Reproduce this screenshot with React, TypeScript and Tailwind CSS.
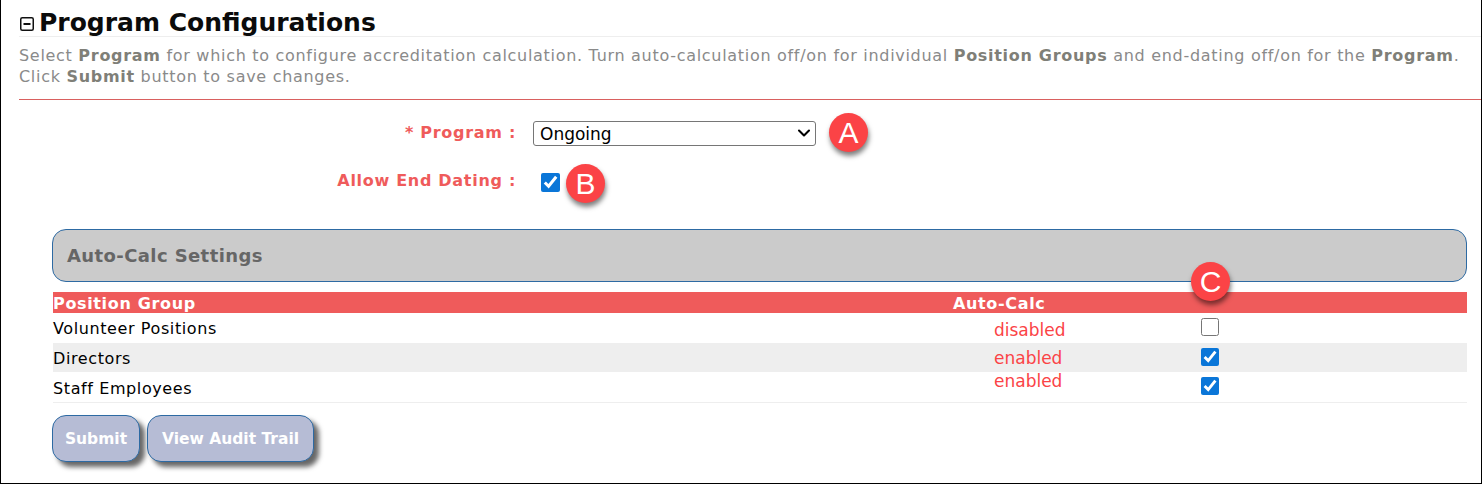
import { ChevronDown } from 'lucide-react'

const FONT = 'font-["DejaVu_Sans",Verdana,sans-serif]'

function Badge({ letter, className }: { letter: string; className: string }) {
  return (
    <span
      className={`absolute flex size-[39px] items-center justify-center rounded-full bg-[#fb4346] font-["Liberation_Sans",sans-serif] text-[30px] leading-none text-white shadow-[1px_4px_5px_rgba(0,0,0,0.5)] ${className}`}
    >
      {letter}
    </span>
  )
}

const ROWS = [
  { name: 'Volunteer Positions', status: 'disabled', on: false, rowClass: 'h-[30px] bg-white', nameClass: 'pt-[2px]', statusClass: 'pt-[4px]' },
  { name: 'Directors', status: 'enabled', on: true, rowClass: 'h-[29px] bg-[#eeeeee]', nameClass: 'pt-[2px]', statusClass: '' },
  { name: 'Staff Employees', status: 'enabled', on: true, rowClass: 'h-[30px] bg-white', nameClass: 'pt-[4px]', statusClass: '-mt-[12px]' },
]

const BUTTONS = [
  { label: 'Submit', width: 'w-[88px]' },
  { label: 'View Audit Trail', width: 'w-[167px]' },
]

export default function App() {
  return (
    <div className={`relative h-[484px] w-[1482px] overflow-hidden border-b border-l border-r border-black bg-white pl-[18px] ${FONT}`}>
      {/* Titel */}
      <div className="flex h-[37px] items-center gap-[5px] border-b border-[#eeeeee] pt-[9px]">
        <svg width="14" height="14" viewBox="0 0 14 14" className="ml-[1px] mt-[3px]" aria-hidden>
          <rect x="0.75" y="0.75" width="12.5" height="12.5" rx="1.5" fill="none" stroke="#111" strokeWidth="1.5" />
          <rect x="3.5" y="6" width="7" height="2" fill="#111" />
        </svg>
        <h1 className="text-[25px] font-bold leading-none text-[#0b0b0b]">Program Configurations</h1>
      </div>

      <p className="h-[63px] border-b border-[#d9605f] pt-[8px] text-[16px] leading-[21px] tracking-[0.7px] text-[#8a8a8a]">
        Select <b className="text-[#7f7f78]">Program</b> for which to configure accreditation calculation. Turn auto-calculation off/on for individual{' '}
        <b className="text-[#7f7f78]">Position Groups</b> and end-dating off/on for the <b className="text-[#7f7f78]">Program</b>.
        <br />
        Click <b className="text-[#7f7f78]">Submit</b> button to save changes.
      </p>

      {/* Formular */}
      <div className="grid grid-cols-[497px_1fr] items-center gap-x-[17px] text-[16px] font-bold tracking-[0.7px] text-[#ef5b5b]">
        <label className="mt-[19px] text-right">* Program :</label>
        <div className="relative mt-[21px] h-[25px] w-[283px]">
          <select className="h-full w-full appearance-none rounded-[3px] border border-[#767676] bg-white pl-[6px] text-[17px] font-normal tracking-normal text-black">
            <option>Ongoing</option>
          </select>
          <ChevronDown className="pointer-events-none absolute right-[2px] top-[2px] size-[20px] text-black" strokeWidth={2.5} aria-hidden />
        </div>
        <label className="mt-[23px] text-right">Allow End Dating :</label>
        <input type="checkbox" defaultChecked className="ml-[8px] mt-[26px] size-[19px] accent-[#0a76d8]" />
      </div>

      {/* Auto-Calc */}
      <div className="ml-[33px] mr-[14px] mt-[36px] flex h-[53px] items-center rounded-[14px] border border-[#2d6aa3] bg-[#cbcbcb] pl-[14px] text-[18px] font-bold tracking-[0.4px] text-[#666666]">
        Auto-Calc Settings
      </div>

      <div className="ml-[34px] mr-[14px] mt-[10px] border-b border-[#eeeeee]">
        <div className="grid h-[21px] grid-cols-[900px_1fr] items-center bg-[#ef5b5b] pt-[2px] text-[16px] font-bold leading-none tracking-[0.65px] text-white">
          <span>Position Group</span>
          <span>Auto-Calc</span>
        </div>
        {ROWS.map((row) => (
          <div key={row.name} className={`grid grid-cols-[941px_207px_1fr] items-center ${row.rowClass} text-[16px] tracking-[0.6px] text-black`}>
            <span className={row.nameClass}>{row.name}</span>
            <span className={`text-[17px] leading-[18px] tracking-normal text-[#fb4346] ${row.statusClass}`}>{row.status}</span>
            <input type="checkbox" defaultChecked={row.on} className="-mt-[2px] size-[18px] accent-[#0a76d8]" />
          </div>
        ))}
      </div>

      {/* Knoppen */}
      <div className="ml-[33px] mt-[12px] flex gap-[7px]">
        {BUTTONS.map((btn) => (
          <button
            key={btn.label}
            className={`h-[47px] ${btn.width} rounded-[14px] border border-[#2d6aa3] bg-[#b6bcd5] pt-[2px] text-[15.5px] font-bold text-white shadow-[5px_5px_5px_rgba(0,0,0,0.6)]`}
          >
            {btn.label}
          </button>
        ))}
      </div>

      <Badge letter="A" className="left-[828px] top-[113px]" />
      <Badge letter="B" className="left-[565px] top-[164px]" />
      <Badge letter="C" className="left-[1190px] top-[262px]" />
    </div>
  )
}
